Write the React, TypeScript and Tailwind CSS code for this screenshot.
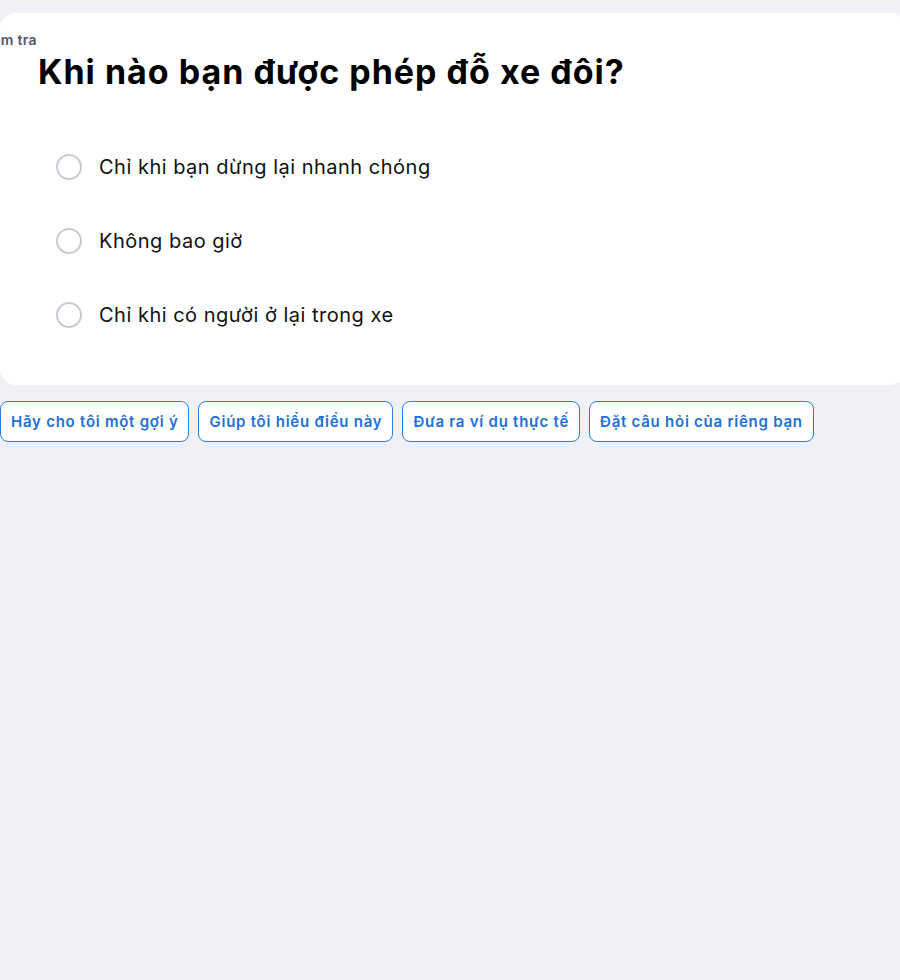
export default function App() {
  const options = [
    "Chỉ khi bạn dừng lại nhanh chóng",
    "Không bao giờ",
    "Chỉ khi có người ở lại trong xe",
  ];
  const prompts = [
    "Hãy cho tôi một gợi ý",
    "Giúp tôi hiểu điều này",
    "Đưa ra ví dụ thực tế",
    "Đặt câu hỏi của riêng bạn",
  ];

  return (
    <div
      className="min-h-[980px] overflow-hidden bg-[#f0f1f6] pt-[13px]"
      style={{ fontFamily: "Inter, 'Noto Sans', sans-serif" }}
    >
      {/* thẻ câu hỏi */}
      <div className="w-[906px] rounded-2xl bg-white pb-[57px] pt-[18px]">
        <div className="-ml-[22px] text-[14px] font-semibold leading-[18px] tracking-[0.3px] text-[#55556a]">
          Kiểm tra
        </div>
        <h1 className="ml-[38px] mt-[3px] text-[34px] font-bold leading-[40px] tracking-[1px] text-black">
          Khi nào bạn được phép đỗ xe đôi?
        </h1>
        <div className="mt-[62px] flex flex-col gap-[48px] pl-[56px]">
          {options.map((o) => (
            <label key={o} className="flex h-[26px] items-center gap-[17px]">
              <span className="h-[26px] w-[26px] shrink-0 rounded-full border-2 border-[#c9cad6] bg-white" />
              <span className="text-[20px] leading-[26px] tracking-[0.5px] text-[#111]">{o}</span>
            </label>
          ))}
        </div>
      </div>

      {/* gợi ý */}
      <div className="mt-[16px] flex gap-[9px]">
        {prompts.map((p) => (
          <button
            key={p}
            type="button"
            className="h-[41px] rounded-lg border border-[#2a7de1] bg-white px-[10px] pt-[1px] text-[15px] font-semibold tracking-[0.75px] text-[#1f6fd8]"
          >
            {p}
          </button>
        ))}
      </div>
    </div>
  );
}
